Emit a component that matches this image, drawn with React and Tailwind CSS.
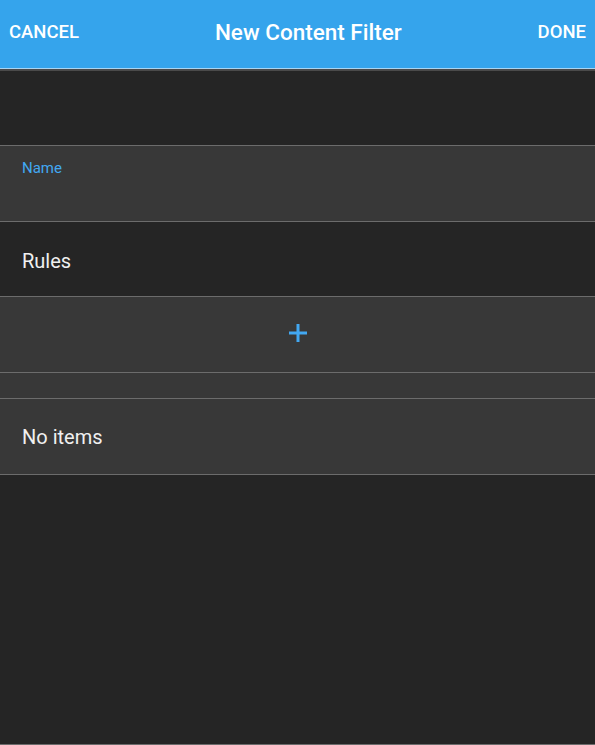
const font = { fontFamily: "Roboto, 'Liberation Sans', sans-serif" };

function Cell({ children, className = "" }) {
  return (
    <div className={`h-[76px] border-b border-[#6c6c6c] bg-[#383838] ${className}`}>
      {children}
    </div>
  );
}

export default function App() {
  return (
    <div style={font} className="flex h-[745px] w-[595px] flex-col bg-[#252525] text-[#f0f0f0]">
      <header className="flex h-[69px] shrink-0 items-center border-b border-[#a8d4f2] bg-[#35a4ec] px-[9px] pb-[2px] text-white">
        <button className="text-[18.5px] font-medium">CANCEL</button>
        <h1 className="flex-1 text-center text-[22.5px] font-medium">New Content Filter</h1>
        <button className="text-[18.5px] font-medium">DONE</button>
      </header>
      <div className="h-[2px] bg-[#4a4a4a]" />

      <div className="h-[75px] border-b border-[#6c6c6c]" />

      <Cell className="px-[22px] pt-[10px]">
        <label className="text-[15px] text-[#42a8f2]">Name</label>
      </Cell>

      <div className="flex h-[75px] items-center border-b border-[#6c6c6c] px-[22px] pt-[3px] text-[20px]">
        Rules
      </div>

      <Cell className="flex items-center justify-center pb-[4px]">
        <svg width="20" height="20" viewBox="0 0 20 20" className="text-[#42a8f2]">
          <path d="M10 1v18M1 10h18" stroke="currentColor" strokeWidth="3" />
        </svg>
      </Cell>

      <div className="h-[26px] border-b border-[#6c6c6c] bg-[#383838]" />

      <Cell className="flex items-center px-[22px] text-[20px]">No items</Cell>

      <div className="flex-1 border-b border-[#6c6c6c]" />
    </div>
  );
}
